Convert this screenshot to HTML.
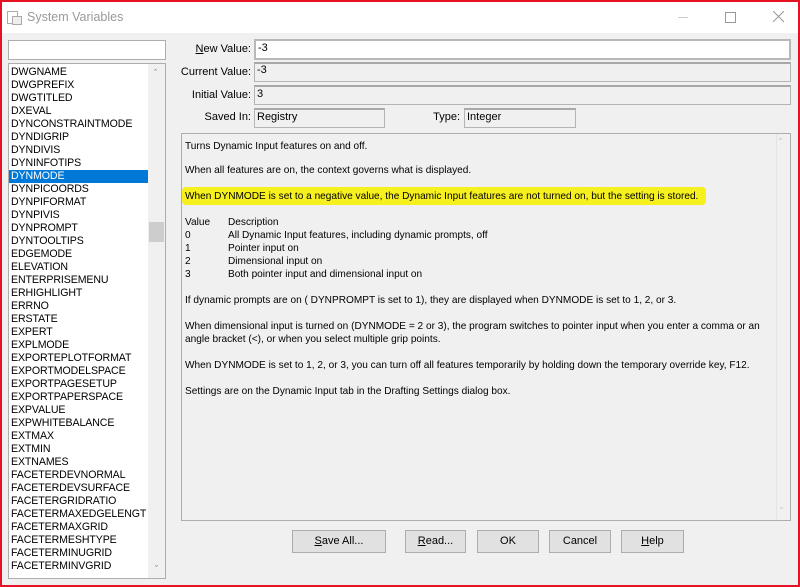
<!DOCTYPE html>
<html><head><style>
*{box-sizing:border-box;margin:0;padding:0}
body{width:800px;height:587px;overflow:hidden;background:#f0f0f0;font-family:"Liberation Sans",Arial,sans-serif;font-size:11px;color:#000;position:relative}
.frame{position:absolute;left:0;top:0;width:800px;height:587px;border:2px solid #e81123;border-top-width:2px;pointer-events:none;z-index:10}
.title{position:absolute;left:0;top:0;width:800px;height:33px;background:#fff}
.title .t{position:absolute;left:27px;top:10px;font-size:12.5px;color:#999}
.ab{position:absolute}
.box{position:absolute;border:1px solid #adadad;background:#fff}
.gbox{position:absolute;border:1px solid #b4b4b4;background:#f0f0f0;border-top:2px solid #a8a8a8}
.lbl{position:absolute;width:100px;text-align:right;font-size:11px}
.list{position:absolute;left:8px;top:63px;width:158px;height:516px;background:#fff;border:1px solid #adadad;overflow:hidden;padding-top:2px}
.list div{height:13px;line-height:13px;padding-left:2px;font-size:10.6px;letter-spacing:-0.1px}
.list .sel{background:#0078d7;color:#fff;width:139px}
.desc{position:absolute;left:181px;top:133px;width:610px;height:388px;border:1px solid #adadad;background:#f0f0f0}
.desc p{position:absolute;left:3px;font-size:10.1px;white-space:nowrap}
.btn{position:absolute;top:530px;height:23px;background:#e1e1e1;border:1px solid #adadad;text-align:center;line-height:21px;font-size:11px}
</style></head><body>
<div class="title">
<svg class="ab" style="left:7px;top:11px" width="15" height="14"><rect x="0.5" y="0.5" width="10" height="12" fill="none" stroke="#aaa"/><rect x="5.5" y="5.5" width="9" height="8" fill="#eee" stroke="#aaa"/></svg>
<span class="t">System Variables</span>
<div class="ab" style="left:678px;top:17px;width:10px;height:1px;background:#ccc"></div>
<div class="ab" style="left:725px;top:12px;width:11px;height:11px;border:1px solid #999"></div>
<svg class="ab" style="left:773px;top:11px" width="12" height="12"><path d="M0 0L11 11M11 0L0 11" stroke="#999" stroke-width="1"/></svg>
</div>
<div class="box" style="left:8px;top:40px;width:158px;height:20px"></div>
<div class="list">
<div>DWGNAME</div><div>DWGPREFIX</div><div>DWGTITLED</div><div>DXEVAL</div><div>DYNCONSTRAINTMODE</div><div>DYNDIGRIP</div><div>DYNDIVIS</div><div>DYNINFOTIPS</div><div class="sel">DYNMODE</div><div>DYNPICOORDS</div><div>DYNPIFORMAT</div><div>DYNPIVIS</div><div>DYNPROMPT</div><div>DYNTOOLTIPS</div><div>EDGEMODE</div><div>ELEVATION</div><div>ENTERPRISEMENU</div><div>ERHIGHLIGHT</div><div>ERRNO</div><div>ERSTATE</div><div>EXPERT</div><div>EXPLMODE</div><div>EXPORTEPLOTFORMAT</div><div>EXPORTMODELSPACE</div><div>EXPORTPAGESETUP</div><div>EXPORTPAPERSPACE</div><div>EXPVALUE</div><div>EXPWHITEBALANCE</div><div>EXTMAX</div><div>EXTMIN</div><div>EXTNAMES</div><div>FACETERDEVNORMAL</div><div>FACETERDEVSURFACE</div><div>FACETERGRIDRATIO</div><div>FACETERMAXEDGELENGT</div><div>FACETERMAXGRID</div><div>FACETERMESHTYPE</div><div>FACETERMINUGRID</div><div>FACETERMINVGRID</div>
<div class="ab" style="left:139px;top:0;width:17px;height:514px;background:#f0f0f0"></div>
<div class="ab" style="left:140px;top:158px;width:15px;height:20px;background:#cdcdcd"></div>
<div class="ab" style="left:143px;top:3px;font-size:9px;color:#666">&#710;</div>
<div class="ab" style="left:144px;top:499px;font-size:9px;color:#666">&#711;</div>
</div>
<div class="lbl" style="left:151px;top:43px"><u>N</u>ew Value:</div>
<div class="lbl" style="left:151px;top:66px">Current Value:</div>
<div class="lbl" style="left:151px;top:89px">Initial Value:</div>
<div class="lbl" style="left:151px;top:111px">Saved In:</div>
<div class="lbl" style="left:360px;top:111px">Type:</div>
<div class="box" style="left:254px;top:39px;width:537px;height:21px;border:2px solid #b8b8b8;padding:1px 2px">-3</div>
<div class="gbox" style="left:254px;top:62px;width:537px;height:20px;padding:0 2px">-3</div>
<div class="gbox" style="left:254px;top:85px;width:537px;height:20px;padding:1px 2px">3</div>
<div class="gbox" style="left:254px;top:108px;width:131px;height:20px;padding:1px 2px">Registry</div>
<div class="gbox" style="left:464px;top:108px;width:112px;height:20px;padding:1px 2px">Integer</div>
<div class="desc">
<div class="ab" style="left:0;top:53px;width:524px;height:18px;background:#f5f01e;border-radius:4px"></div>
<p style="top:7px">Turns Dynamic Input features on and off.</p>
<p style="top:31px">When all features are on, the context governs what is displayed.</p>
<p style="top:57px">When DYNMODE is set to a negative value, the Dynamic Input features are not turned on, but the setting is stored.</p>
<p style="top:83px">Value</p><p style="left:46px;top:83px">Description</p>
<p style="top:96px">0</p><p style="left:46px;top:96px">All Dynamic Input features, including dynamic prompts, off</p>
<p style="top:109px">1</p><p style="left:46px;top:109px">Pointer input on</p>
<p style="top:122px">2</p><p style="left:46px;top:122px">Dimensional input on</p>
<p style="top:135px">3</p><p style="left:46px;top:135px">Both pointer input and dimensional input on</p>
<p style="top:161px">If dynamic prompts are on ( DYNPROMPT is set to 1), they are displayed when DYNMODE is set to 1, 2, or 3.</p>
<p style="top:187px">When dimensional input is turned on (DYNMODE = 2 or 3), the program switches to pointer input when you enter a comma or an</p>
<p style="top:200px">angle bracket (&lt;), or when you select multiple grip points.</p>
<p style="top:226px">When DYNMODE is set to 1, 2, or 3, you can turn off all features temporarily by holding down the temporary override key, F12.</p>
<p style="top:252px">Settings are on the Dynamic Input tab in the Drafting Settings dialog box.</p>
<div class="ab" style="left:594px;top:0;width:14px;height:386px;border-left:1px solid #e4e4e4"></div>
<div class="ab" style="left:597px;top:3px;font-size:9px;color:#aaa">&#710;</div>
<div class="ab" style="left:598px;top:372px;font-size:9px;color:#aaa">&#711;</div>
</div>
<div class="btn" style="left:292px;width:94px"><u>S</u>ave All...</div>
<div class="btn" style="left:405px;width:61px"><u>R</u>ead...</div>
<div class="btn" style="left:477px;width:62px">OK</div>
<div class="btn" style="left:549px;width:62px">Cancel</div>
<div class="btn" style="left:621px;width:63px"><u>H</u>elp</div>
<div class="frame"></div>
</body></html>
